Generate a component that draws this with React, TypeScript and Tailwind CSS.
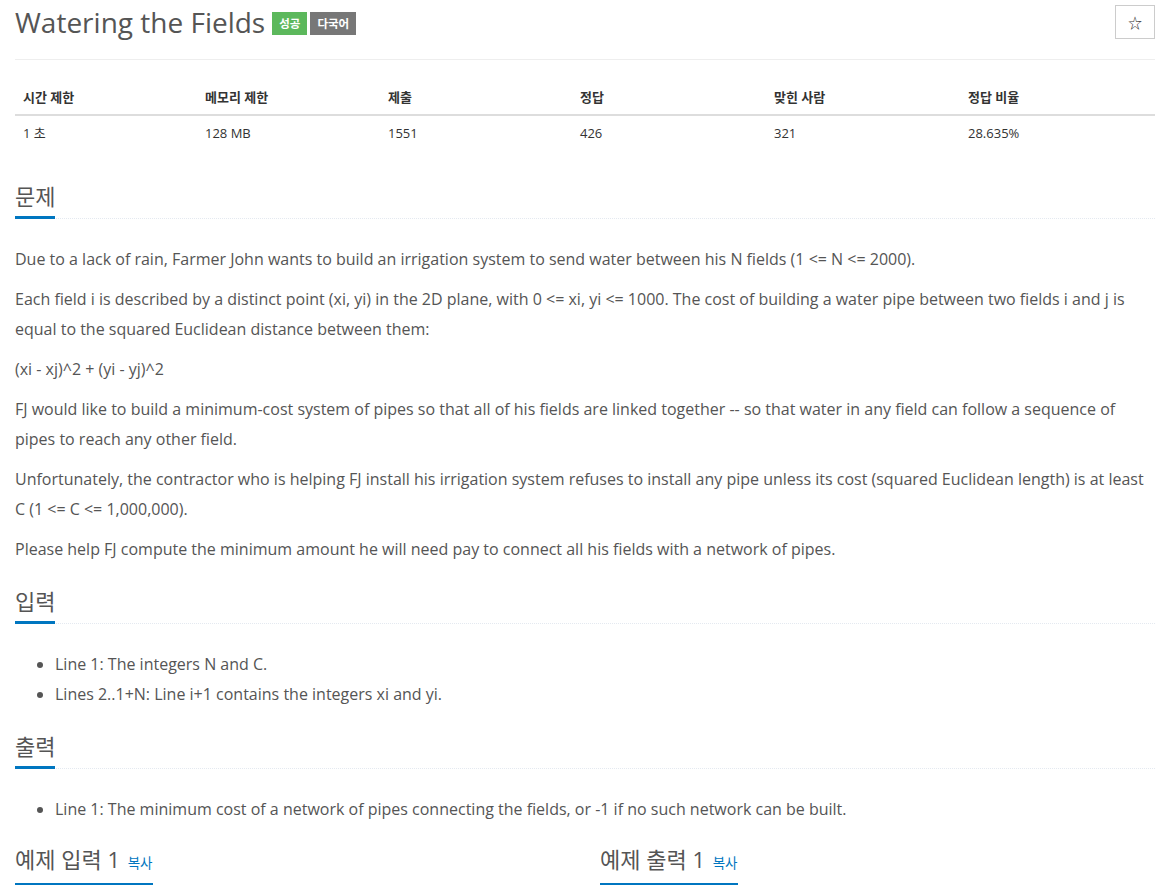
import React from "react";

const font = { fontFamily: '"Open Sans", "Noto Sans CJK KR", sans-serif' };

function Headline({ children, first }: { children: React.ReactNode; first?: boolean }) {
  return (
    <div
      className={
        (first ? "mt-[13px] " : "mt-[25px] ") +
        "mb-[25px] border-b border-dotted border-[#e4e9f0]"
      }
    >
      <h2 className="inline-block -mb-px border-b-[3px] border-[#0076c0] pb-[8px] text-[22px] leading-[24px] font-normal text-[#555]">
        {children}
      </h2>
    </div>
  );
}

export default function App() {
  const cols = [
    { h: "시간 제한", v: "1 초", w: 182 },
    { h: "메모리 제한", v: "128 MB", w: 183 },
    { h: "제출", v: "1551", w: 192 },
    { h: "정답", v: "426", w: 194 },
    { h: "맞힌 사람", v: "321", w: 194 },
    { h: "정답 비율", v: "28.635%", w: 195 },
  ];
  return (
    <div className="w-[1170px] px-[15px] bg-white text-[#555]" style={font}>
      <div className="flex items-start justify-between border-b border-[#eee] pb-[19px]">
        <h1 className="mt-[4px] flex items-center text-[28px] leading-[36px] font-normal text-[#555]">
          <span>Watering the Fields</span>
          <span className="ml-[7px] mt-[3px] inline-flex h-[23px] items-center bg-[#5cb85c] px-[7px] text-[11.5px] font-bold text-white">
            성공
          </span>
          <span className="ml-[3px] mt-[3px] inline-flex h-[23px] items-center bg-[#777] px-[7px] text-[11.5px] font-bold text-white">
            다국어
          </span>
        </h1>
        <button className="mt-[5px] flex h-[34px] w-[40px] items-center justify-center border border-[#ccc] bg-white text-[14px] text-[#333]">
          ☆
        </button>
      </div>

      <table className="mt-[20px] mb-[34px] w-full border-collapse text-[13px]">
        <thead>
          <tr className="border-b-2 border-[#ddd]">
            {cols.map((c) => (
              <th
                key={c.h}
                style={{ width: c.w }}
                className="px-[8px] py-[8px] text-left font-bold leading-[18px] text-[#333]"
              >
                {c.h}
              </th>
            ))}
          </tr>
        </thead>
        <tbody>
          <tr>
            {cols.map((c) => (
              <td key={c.h} className="px-[8px] py-[8px] leading-[18px] text-[#333]">
                {c.v}
              </td>
            ))}
          </tr>
        </tbody>
      </table>

      <Headline>문제</Headline>
      <div className="text-[16px] leading-[30px]">
        <p className="mb-[10px]">
          Due to a lack of rain, Farmer John wants to build an irrigation system to send water between his N fields (1 &lt;= N &lt;= 2000).
        </p>
        <p className="mb-[10px]">
          Each field i is described by a distinct point (xi, yi) in the 2D plane, with 0 &lt;= xi, yi &lt;= 1000. The cost of building a water pipe between two fields i and j is equal to the squared Euclidean distance between them:
        </p>
        <p className="mb-[10px]">(xi - xj)^2 + (yi - yj)^2</p>
        <p className="mb-[10px]">
          FJ would like to build a minimum-cost system of pipes so that all of his fields are linked together -- so that water in any field can follow a sequence of pipes to reach any other field.
        </p>
        <p className="mb-[10px]">
          Unfortunately, the contractor who is helping FJ install his irrigation system refuses to install any pipe unless its cost (squared Euclidean length) is at least C (1 &lt;= C &lt;= 1,000,000).
        </p>
        <p className="mb-[10px]">
          Please help FJ compute the minimum amount he will need pay to connect all his fields with a network of pipes.
        </p>
      </div>

      <Headline>입력</Headline>
      <ul className="mb-[10px] list-disc pl-[40px] text-[16px] leading-[30px]">
        <li>Line 1: The integers N and C.</li>
        <li>Lines 2..1+N: Line i+1 contains the integers xi and yi.</li>
      </ul>

      <Headline>출력</Headline>
      <ul className="mb-[10px] list-disc pl-[40px] text-[16px] leading-[30px]">
        <li>Line 1: The minimum cost of a network of pipes connecting the fields, or -1 if no such network can be built.</li>
      </ul>

      <div className="-mx-[15px] flex">
        <div className="w-[585px] px-[15px]">
          <Headline first>
            예제 입력 1 <a className="ml-[2px] text-[13.5px] text-[#0076c0]">복사</a>
          </Headline>
        </div>
        <div className="w-[585px] px-[15px]">
          <Headline first>
            예제 출력 1 <a className="ml-[2px] text-[13.5px] text-[#0076c0]">복사</a>
          </Headline>
        </div>
      </div>
    </div>
  );
}
